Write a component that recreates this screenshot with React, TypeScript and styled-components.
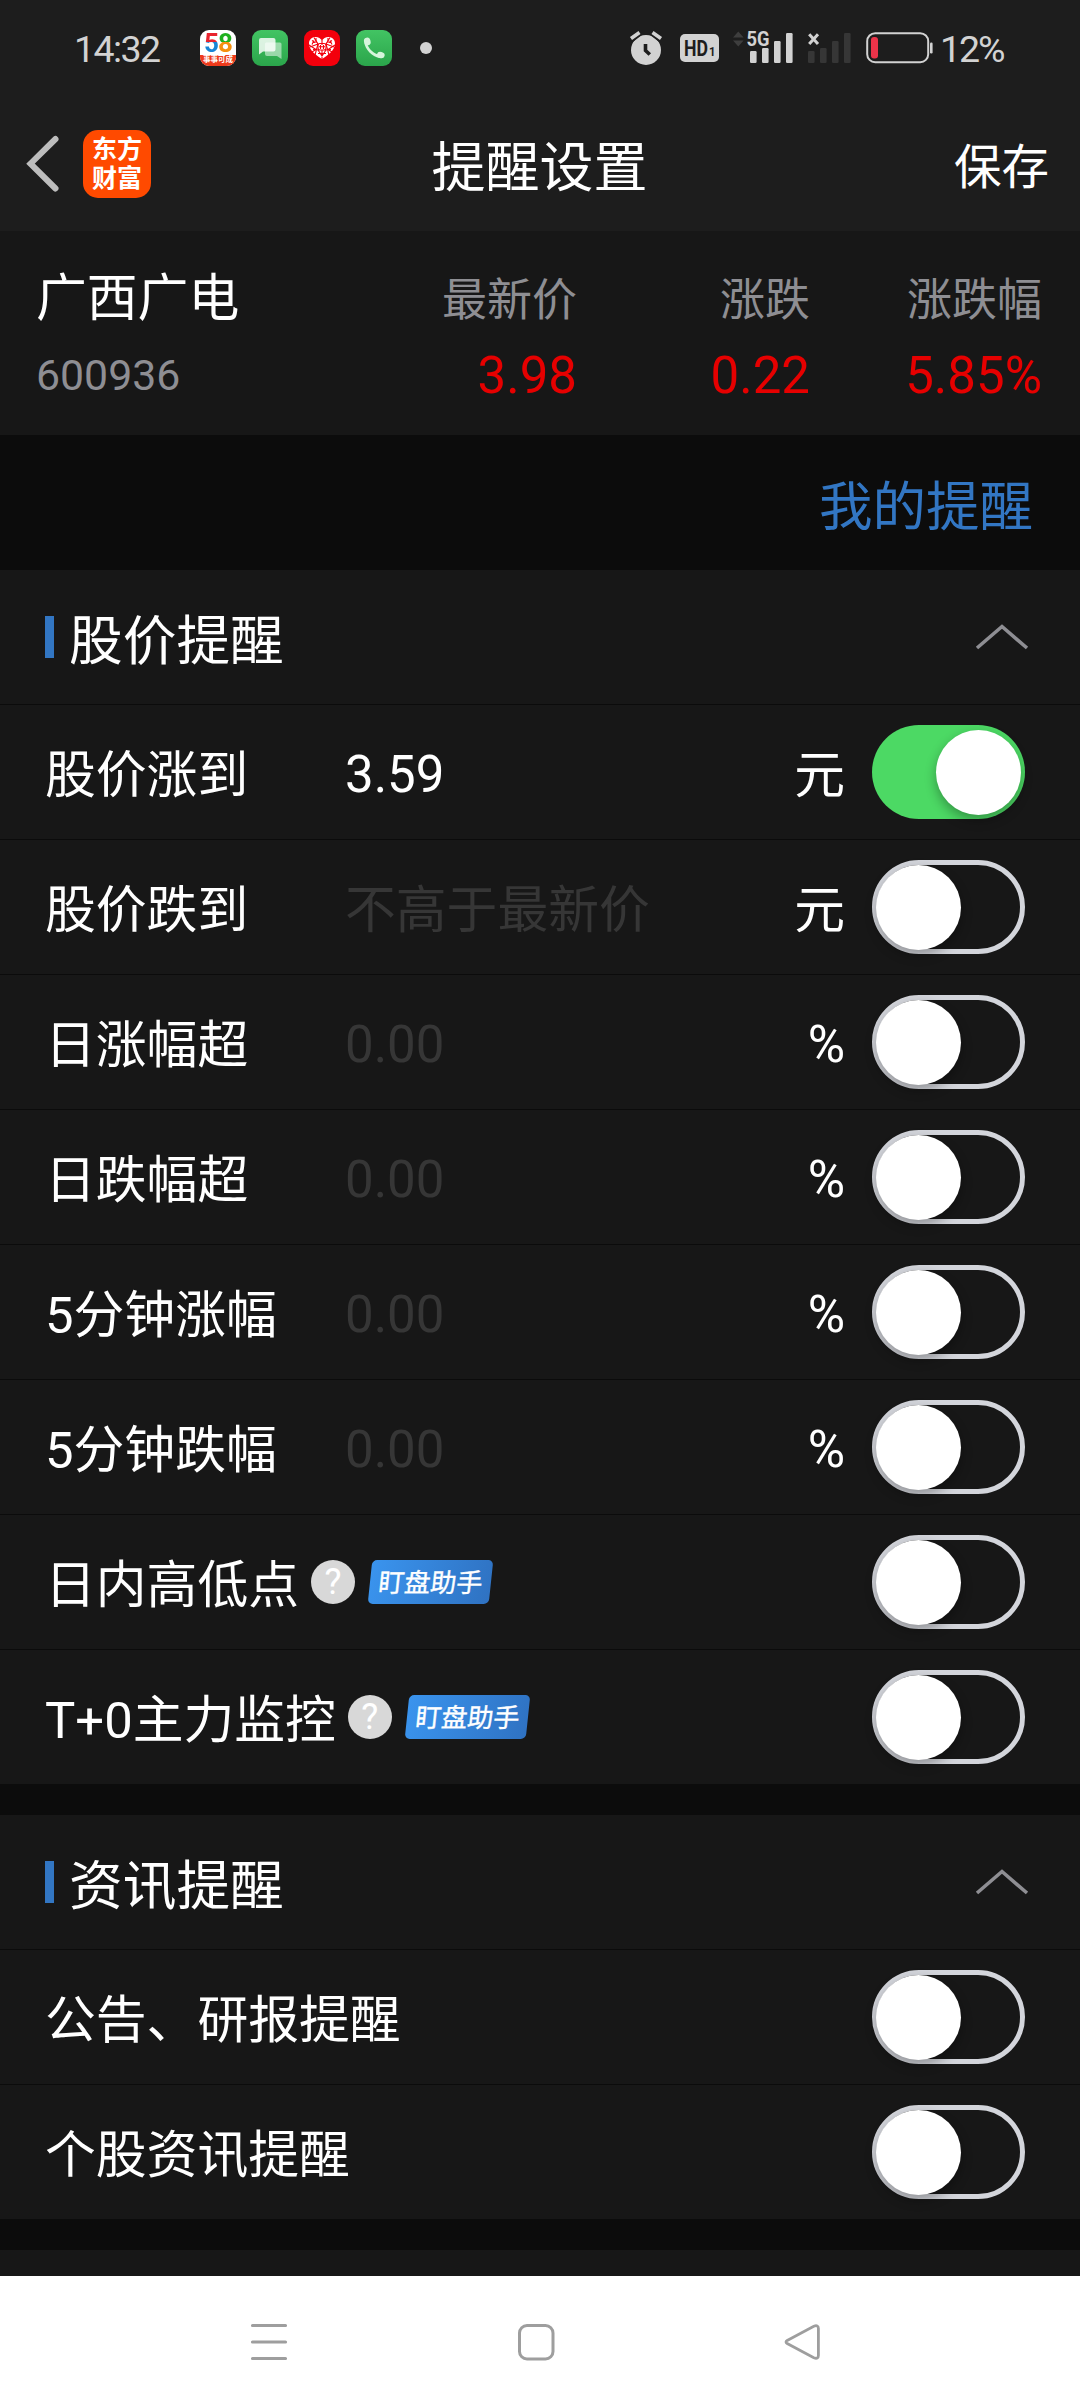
import React, { useState } from 'react';
import styled, { createGlobalStyle } from 'styled-components';

const c = {
  header: '#1d1d1d',
  panel: '#171717',
  gap: '#0c0c0c',
  line: '#0b0b0b',
  blue: '#3276c3',
  red: '#e60000',
  grey: '#8e8e93',
  hint: '#363636',
  status: '#d2d2d2',
};

const GlobalStyle = createGlobalStyle`
  * { box-sizing: border-box; }
  body {
    margin: 0;
    background: ${c.gap};
    color: #fff;
    font-family: Roboto, 'Noto Sans CJK SC', sans-serif;
  }
`;

const Screen = styled.div`
  width: 1080px;
  height: 2408px;
  overflow: hidden;
  display: flex;
  flex-direction: column;
  background: ${c.gap};
`;

/* ---------- status bar ---------- */

const StatusBar = styled.div`
  flex: none;
  height: 96px;
  display: flex;
  align-items: center;
  padding: 0 74px 0 74px;
  background: ${c.header};
  color: ${c.status};
`;

const Clock = styled.span`
  width: 126px;
  font-size: 37.5px;
  line-height: 44px;
  letter-spacing: -1.6px;
  padding-top: 2px;
`;

const Notifications = styled.div`
  display: flex;
  align-items: center;
  gap: 16px;
`;

const AppTile = styled.div<{ $bg: string }>`
  width: 36px;
  height: 36px;
  border-radius: 9px;
  display: flex;
  flex-direction: column;
  align-items: center;
  background: ${(p) => p.$bg};
`;

const TileDigits = styled.div`
  display: flex;
  height: 25px;
  font-size: 26px;
  font-weight: 700;
  line-height: 26px;
  letter-spacing: -1px;
  flex: none;
`;

const TwoTone = styled.span<{ $top: string; $bottom: string }>`
  background: linear-gradient(${(p) => p.$top} 47%, ${(p) => p.$bottom} 47%);
  -webkit-background-clip: text;
  background-clip: text;
  color: transparent;
`;

const TileStrip = styled.div`
  flex: none;
  width: 36px;
  height: 11px;
  border-radius: 0 0 9px 9px;
  background: #ee3a1b;
  color: #fff;
  font-size: 7.5px;
  font-weight: 700;
  line-height: 10px;
  text-align: center;
  white-space: nowrap;
`;

const MoreDot = styled.span`
  width: 12px;
  height: 12px;
  margin-left: 12px;
  border-radius: 50%;
  background: ${c.status};
`;

const SystemIcons = styled.div`
  margin-left: auto;
  display: flex;
  align-items: center;
`;

const Glyph = styled.svg<{ $ml?: number }>`
  flex: none;
  display: block;
  overflow: visible;
  margin-left: ${(p) => p.$ml ?? 0}px;
`;

const BatteryText = styled.span`
  width: 66px;
  margin-left: 7px;
  font-size: 37.5px;
  line-height: 44px;
  letter-spacing: -2.1px;
  padding-top: 2px;
  white-space: nowrap;
`;

/* ---------- title bar ---------- */

const TitleBar = styled.header`
  flex: none;
  height: 135px;
  display: grid;
  grid-template-columns: 1fr auto 1fr;
  align-items: center;
  padding: 0 31px 0 24px;
  background: ${c.header};
`;

const TitleLeft = styled.div`
  display: flex;
  align-items: center;
  gap: 23px;
`;

const BrandLogo = styled.div`
  width: 68px;
  height: 68px;
  border-radius: 15px;
  background: #ff4a00;
  display: grid;
  grid-template-columns: 25px 25px;
  grid-auto-rows: 29px;
  justify-content: center;
  align-content: center;
  font-size: 25px;
  font-weight: 700;
  line-height: 29px;
  text-align: center;
`;

const Title = styled.h1`
  margin: 0;
  padding: 11px 0 0 6px;
  font-size: 54px;
  font-weight: 400;
  line-height: 64px;
`;

const SaveButton = styled.button`
  justify-self: end;
  border: 0;
  padding: 9px 0 0;
  background: none;
  color: #fff;
  font: inherit;
  font-size: 47.5px;
  line-height: 60px;
`;

/* ---------- quote summary ---------- */

const Quote = styled.section`
  flex: none;
  height: 204px;
  display: grid;
  grid-template-columns: 341px 200px 233px 232px;
  grid-template-rows: 60px 60px;
  row-gap: 16px;
  padding: 38px 38px 0 36px;
  background: ${c.panel};
`;

const QuoteCell = styled.div<{ $size: number; $color: string; $right?: boolean; $shift?: number }>`
  font-size: ${(p) => p.$size}px;
  line-height: 60px;
  padding-top: ${(p) => p.$shift ?? 0}px;
  color: ${(p) => p.$color};
  text-align: ${(p) => (p.$right ? 'right' : 'left')};
  white-space: nowrap;
`;

const MyAlerts = styled.div`
  flex: none;
  height: 135px;
  display: flex;
  align-items: center;
  justify-content: flex-end;
  padding: 10px 47px 0 0;
  color: ${c.blue};
  font-size: 53.5px;
  line-height: 64px;
`;

/* ---------- settings groups ---------- */

const Group = styled.section`
  flex: none;
  margin-bottom: 31px;
  background: ${c.panel};
`;

const GroupHead = styled.div`
  height: 135px;
  display: flex;
  align-items: center;
  padding: 0 50px 0 45px;
  border-bottom: 1px solid ${c.line};
`;

const Marker = styled.span`
  width: 9px;
  height: 42px;
  background: ${c.blue};
`;

const GroupTitle = styled.h2`
  flex: 1;
  margin: 0;
  padding: 10px 0 0 15px;
  font-size: 53.7px;
  font-weight: 400;
  line-height: 64px;
`;

const Row = styled.div`
  height: 135px;
  display: flex;
  align-items: center;
  padding: 0 55px 0 45px;
  border-bottom: 1px solid ${c.line};

  &:last-child {
    height: 134px;
    border-bottom: 0;
  }
`;

const RowText = styled.span<{ $width?: number; $color?: string; $cjk?: boolean }>`
  width: ${(p) => (p.$width ? `${p.$width}px` : 'auto')};
  padding-top: ${(p) => (p.$cjk ? 8 : 6)}px;
  color: ${(p) => p.$color ?? '#fff'};
  font-size: ${(p) => (p.$cjk ? 50.8 : 51)}px;
  line-height: 60px;
  white-space: nowrap;
`;

const RowEnd = styled.div`
  margin-left: auto;
  display: flex;
  align-items: center;
  gap: 27px;
`;

const Help = styled.span`
  width: 44px;
  height: 44px;
  margin-left: 12px;
  border-radius: 50%;
  background: #d8d8d8;
  color: #fff;
  font-size: 36px;
  line-height: 45px;
  text-align: center;
`;

const Badge = styled.span`
  width: 121px;
  height: 44px;
  margin-left: 15px;
  border-radius: 5px;
  background: linear-gradient(100deg, #3a94ee, #2f72c2);
  transform: skewX(-6deg);
  font-size: 26px;
  font-weight: 400;
  -webkit-text-stroke: 0.4px #fff;
  line-height: 46px;
  text-align: center;
  white-space: nowrap;
`;

const Track = styled.button<{ $on: boolean }>`
  width: 153px;
  height: 94px;
  padding: ${(p) => (p.$on ? '4px' : '0')};
  border: ${(p) => (p.$on ? '0' : '5px solid #d3d5db')};
  border-radius: 47px;
  background: ${(p) => (p.$on ? '#4cd964' : 'transparent')};
  display: flex;
  align-items: center;
  justify-content: ${(p) => (p.$on ? 'flex-end' : 'flex-start')};
`;

const Knob = styled.span<{ $on: boolean }>`
  width: 85px;
  height: 85px;
  margin: 0 ${(p) => (p.$on ? 0 : -1)}px;
  flex: none;
  border-radius: 50%;
  background: #fff;
  box-shadow: 0 5px 12px rgba(0, 0, 0, 0.32);
`;

const NextGroup = styled.div`
  flex: none;
  height: 26px;
  background: ${c.panel};
`;

/* ---------- system navigation ---------- */

const NavBar = styled.nav`
  flex: none;
  height: 132px;
  display: flex;
  align-items: center;
  justify-content: space-between;
  padding: 0 258px 0 249px;
  background: #fff;
`;

const BARS = [
  { x: 0, y: 18 },
  { x: 12, y: 15 },
  { x: 24, y: 8 },
  { x: 36, y: 0 },
];

function SignalBars({ color, dx }: { color: string; dx: number }) {
  return (
    <g fill={color}>
      {BARS.map((b) => (
        <rect key={b.x} x={b.x + dx} y={b.y + 3} width={6.6} height={30 - b.y} rx={1.2} />
      ))}
    </g>
  );
}

function Chevron() {
  return (
    <Glyph width="56" height="28" viewBox="0 0 56 28" fill="none">
      <path d="M3 25 28 3.500 53 25" stroke={c.grey} strokeWidth="3.600" />
    </Glyph>
  );
}

function Switch({ initial = false }: { initial?: boolean }) {
  const [on, setOn] = useState(initial);
  return (
    <Track $on={on} role="switch" aria-checked={on} onClick={() => setOn(!on)}>
      <Knob $on={on} />
    </Track>
  );
}

type Item = {
  label: string;
  value?: string;
  hint?: string;
  unit?: string;
  on?: boolean;
  assistant?: boolean;
};

const PRICE_ITEMS: Item[] = [
  { label: '股价涨到', value: '3.59', unit: '元', on: true },
  { label: '股价跌到', hint: '不高于最新价', unit: '元' },
  { label: '日涨幅超', hint: '0.00', unit: '%' },
  { label: '日跌幅超', hint: '0.00', unit: '%' },
  { label: '5分钟涨幅', hint: '0.00', unit: '%' },
  { label: '5分钟跌幅', hint: '0.00', unit: '%' },
  { label: '日内高低点', assistant: true },
  { label: 'T+0主力监控', assistant: true },
];

const NEWS_ITEMS: Item[] = [{ label: '公告、研报提醒' }, { label: '个股资讯提醒' }];

const hasCjk = (text: string) => /[\u4e00-\u9fff]/.test(text);

function Field({ text, width, color }: { text: string; width?: number; color?: string }) {
  return (
    <RowText $cjk={hasCjk(text)} $width={width} $color={color}>
      {text}
    </RowText>
  );
}

function AlertGroup({ title, items }: { title: string; items: Item[] }) {
  return (
    <Group>
      <GroupHead>
        <Marker />
        <GroupTitle>{title}</GroupTitle>
        <Chevron />
      </GroupHead>
      {items.map((it) => (
        <Row key={it.label}>
          <Field text={it.label} width={it.unit ? 300 : undefined} />
          {it.unit && <Field text={it.value ?? it.hint ?? ''} color={it.value ? '#fff' : c.hint} />}
          {it.assistant && (
            <>
              <Help>?</Help>
              <Badge>盯盘助手</Badge>
            </>
          )}
          <RowEnd>
            {it.unit && <Field text={it.unit} />}
            <Switch initial={it.on} />
          </RowEnd>
        </Row>
      ))}
    </Group>
  );
}

function HeartMark() {
  return (
    <Glyph width="36" height="36" viewBox="0 0 36 36">
      <path
        d="M18 29C13 26 5 20.5 5 13.5C5 9.5 8 7 11.5 7C14.5 7 16.8 8.6 18 10.5C19.2 8.6 21.500 7 24.500 7C28 7 31 9.500 31 13.500C31 20.500 23 26 18 29Z"
        fill="#fff"
      />
      <g stroke="#f3000c" strokeWidth="1.1" fill="none">
        <path d="M18 10v5M18 20v9M10 7.500 14 14 6 17M26 7.500 22 14 30 17M14 14 11 25M22 14 25 25M9 19.500 14 20 18 26 22 20 27 19.500" />
        <rect x="14" y="13.500" width="8" height="6.500" rx="2" />
        <path d="M16.500 15v4M19.500 15v4M15 16.800h6M8 10.500l3 2M28 10.500l-3 2M8 14.500l2-4M28 14.500l-2-4" />
        <path d="M5 15 12 19.500 8 22M31 15 24 19.500 28 22M14 23.500h8M12 8v5M24 8v5" />
      </g>
    </Glyph>
  );
}

export default function App() {
  return (
    <>
      <GlobalStyle />
      <Screen>
        <StatusBar>
          <Clock>14:32</Clock>
          <Notifications>
            <AppTile $bg="#fff">
              <TileDigits>
                <TwoTone $top="#e8232e" $bottom="#1785d6">5</TwoTone>
                <TwoTone $top="#1fb01f" $bottom="#f5900f">8</TwoTone>
              </TileDigits>
              <TileStrip>事事可成</TileStrip>
            </AppTile>
            <AppTile $bg="linear-gradient(#42c463, #2ba54b)">
              <Glyph width="36" height="36" viewBox="0 0 36 36">
                <path d="M14 12.500H28Q29.500 12.500 29.500 14V29L25 26H15Q13 26 13 24V13.500Z" fill="#fff" opacity=".5" />
                <path d="M9 8H21.500Q23.500 8 23.500 10V19.500Q23.500 21.500 21.500 21.500H11L7 24.500V10Q7 8 9 8Z" fill="#fff" opacity=".82" />
              </Glyph>
            </AppTile>
            <AppTile $bg="#f3000c">
              <HeartMark />
            </AppTile>
            <AppTile $bg="linear-gradient(#42c463, #2ba54b)">
              <Glyph width="36" height="36" viewBox="0 0 36 36">
                <g fill="#d6f5dc">
                  <ellipse cx="11.300" cy="11.500" rx="3.300" ry="3.900" transform="rotate(-15 11.300 11.500)" />
                  <ellipse cx="24.800" cy="25" rx="3.900" ry="3.200" transform="rotate(15 24.800 25)" />
                  <path d="M8.100 12C9 19 16 27.500 24.500 28.200L22.500 24.500C18 23.500 13.500 19.500 11.500 14.700Z" />
                </g>
              </Glyph>
            </AppTile>
            <MoreDot />
          </Notifications>
          <SystemIcons>
            <Glyph width="32" height="36" viewBox="0 0 32 36">
              <circle cx="16" cy="20" r="15" fill={c.status} />
              <path d="M1 9 9.500 2.500M31 9 22.500 2.500" stroke={c.header} strokeWidth="7" />
              <path d="M1 8.500 9.500 2.500M31 8.500 22.500 2.500" stroke={c.status} strokeWidth="3.600" />
              <path d="M15.500 14V20.500L19.800 24.500" stroke={c.header} strokeWidth="3.600" fill="none" />
            </Glyph>
            <Glyph $ml={18} width="39" height="28" viewBox="0 0 39 28">
              <rect width="39" height="28" rx="5" fill={c.status} />
              <g fill={c.header} fontFamily="Roboto, sans-serif" fontWeight="700">
                <text x="4" y="22" fontSize="22.500" textLength="24" lengthAdjust="spacingAndGlyphs">HD</text>
                <text x="29" y="22" fontSize="13" textLength="6.500" lengthAdjust="spacingAndGlyphs">1</text>
              </g>
            </Glyph>
            <Glyph $ml={14.5} width="60" height="36" viewBox="0 0 60 36">
              <path d="M0 7.500 5.300 1.500 10.600 7.500ZM0 10.500 5.300 16.500 10.600 10.500Z" fill="#3e3e3e" />
              <SignalBars color={c.status} dx={17} />
              <text
                x="13.500"
                y="16"
                fontSize="20.500"
                fontFamily="Roboto, sans-serif"
                fontWeight="700"
                fill={c.status}
                stroke={c.header}
                strokeWidth="2"
                paintOrder="stroke"
                textLength="23"
                lengthAdjust="spacingAndGlyphs"
              >
                5G
              </text>
            </Glyph>
            <Glyph $ml={15} width="43" height="36" viewBox="0 0 43 36">
              <SignalBars color="#363636" dx={0} />
              <path d="M1.200 4.200 10 14M10 4.200 1.200 14" stroke={c.status} strokeWidth="3" />
            </Glyph>
            <Glyph $ml={15} width="67" height="32" viewBox="0 0 67 32">
              <rect x="1.200" y="1.200" width="61" height="29" rx="8" fill="none" stroke={c.status} strokeWidth="2" />
              <rect x="5" y="5" width="7" height="21.500" rx="3" fill="#eb3349" />
              <rect x="64" y="10.500" width="2.600" height="11" rx="1.200" fill={c.status} />
            </Glyph>
            <BatteryText>12%</BatteryText>
          </SystemIcons>
        </StatusBar>

        <TitleBar>
          <TitleLeft>
            <Glyph width="36" height="60" viewBox="0 0 36 60" fill="none">
              <path d="M31.500 5 6.500 29.700 31.500 54.500" stroke="#bdbdbd" strokeWidth="6" strokeLinecap="round" />
            </Glyph>
            <BrandLogo>
              <span>东</span>
              <span>方</span>
              <span>财</span>
              <span>富</span>
            </BrandLogo>
          </TitleLeft>
          <Title>提醒设置</Title>
          <SaveButton>保存</SaveButton>
        </TitleBar>

        <Quote>
          <QuoteCell $size={50.8} $color="#fff">广西广电</QuoteCell>
          <QuoteCell $size={45} $color={c.grey} $right $shift={2}>最新价</QuoteCell>
          <QuoteCell $size={45} $color={c.grey} $right $shift={2}>涨跌</QuoteCell>
          <QuoteCell $size={45} $color={c.grey} $right $shift={2}>涨跌幅</QuoteCell>
          <QuoteCell $size={42.8} $color={c.grey}>600936</QuoteCell>
          <QuoteCell $size={51} $color={c.red} $right $shift={1}>3.98</QuoteCell>
          <QuoteCell $size={51} $color={c.red} $right $shift={1}>0.22</QuoteCell>
          <QuoteCell $size={51} $color={c.red} $right $shift={1}>5.85%</QuoteCell>
        </Quote>

        <MyAlerts>我的提醒</MyAlerts>

        <AlertGroup title="股价提醒" items={PRICE_ITEMS} />
        <AlertGroup title="资讯提醒" items={NEWS_ITEMS} />
        <NextGroup />

        <NavBar>
          <Glyph width="40" height="40" viewBox="0 0 40 40" fill="none" stroke="#9e9e9e" strokeWidth="3.200" strokeLinecap="round">
            <path d="M3.500 3.500H36.500M3.500 20H36.500M3.500 36.500H36.500" />
          </Glyph>
          <Glyph width="40" height="40" viewBox="0 0 40 40" fill="none" stroke="#9e9e9e" strokeWidth="3">
            <rect x="3.500" y="3.500" width="33.500" height="33.500" rx="7.500" />
          </Glyph>
          <Glyph width="40" height="40" viewBox="0 0 40 40" fill="none" stroke="#9e9e9e" strokeWidth="2.800">
            <path d="M5.200 18.400 31.800 4.200Q36.400 2.600 36.400 6.500V33.500Q36.400 37.400 31.800 35.800L5.200 21.600Q2.800 20 5.200 18.400Z" />
          </Glyph>
        </NavBar>
      </Screen>
    </>
  );
}
